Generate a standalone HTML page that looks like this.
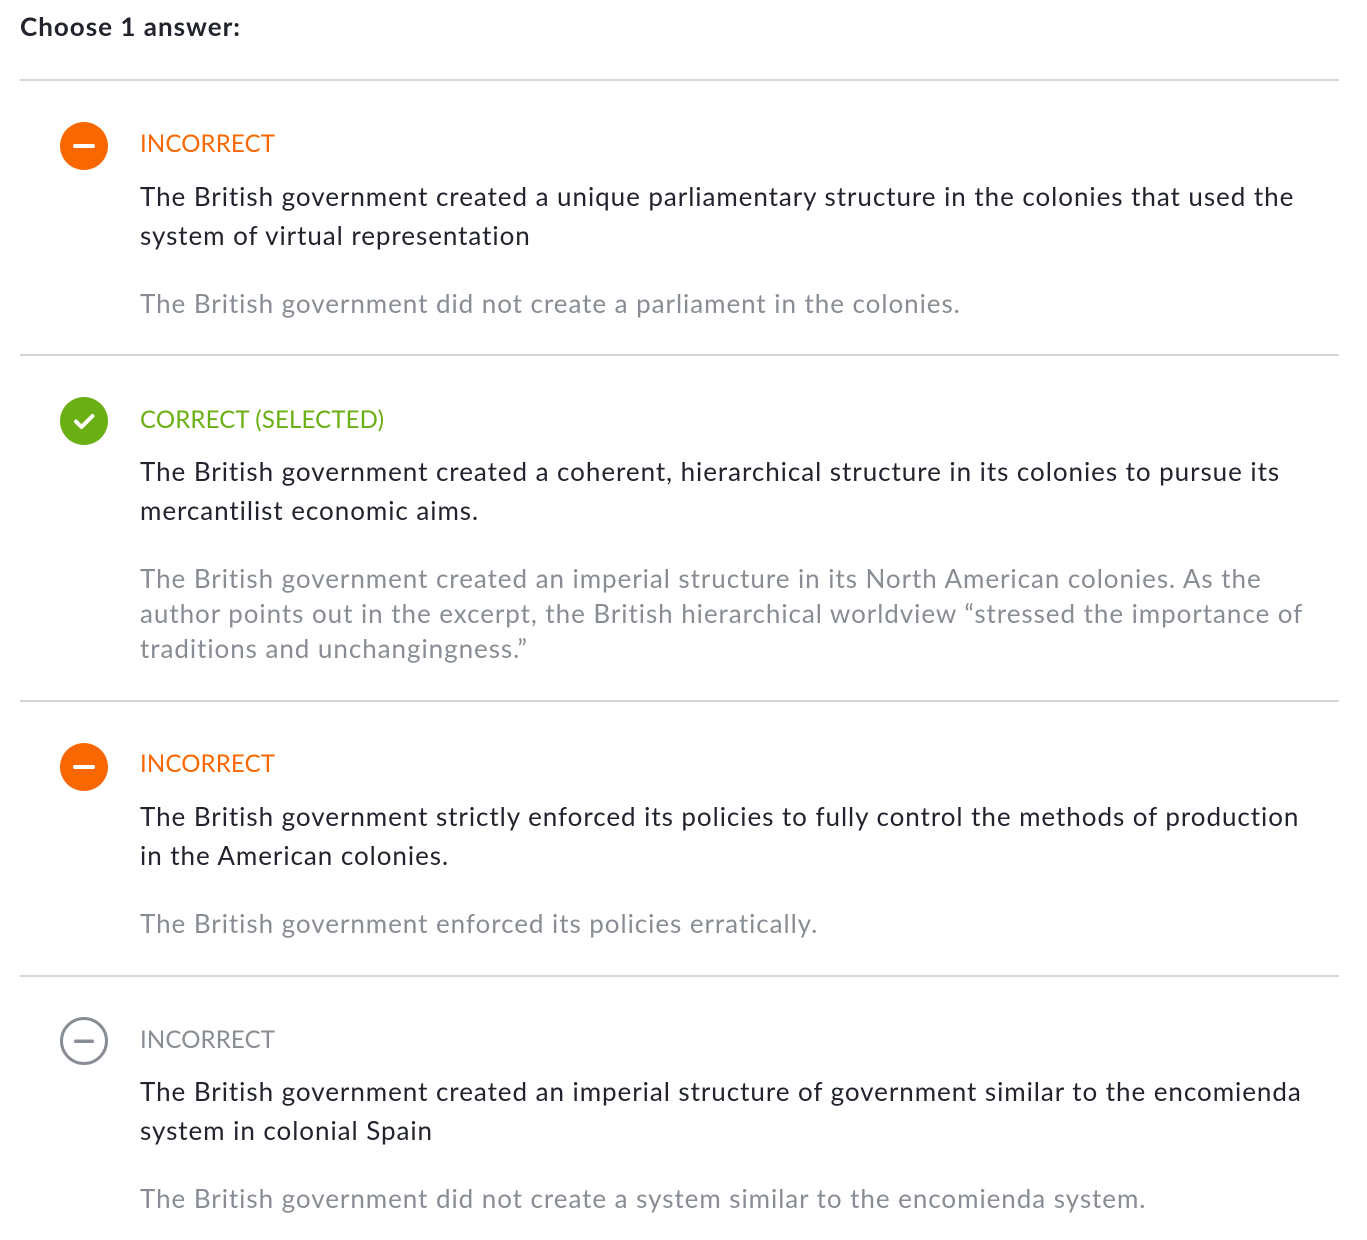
<!DOCTYPE html>
<html><head><meta charset="utf-8"><style>
body{margin:0;width:1367px;height:1240px;background:#fff;font-family:"Lato","Liberation Sans",sans-serif;position:relative;overflow:hidden}
.a{position:absolute;white-space:nowrap}
.h{left:20px;top:10px;font-size:26px;font-weight:bold;color:#21242c;letter-spacing:1px}
.hr{position:absolute;left:20px;width:1319px;height:2px;background:#d6d6d6}
.lab{left:140px;font-size:24px;letter-spacing:0.15px}
.m{left:140px;font-size:26px;line-height:39px;color:#21242c;letter-spacing:0.95px}
.e{left:140px;font-size:26px;line-height:35px;color:#888d93;letter-spacing:0.95px}
.ic{position:absolute;left:60px;width:48px;height:48px}
</style></head><body>
<div class="a h">Choose 1 answer:</div>
<div class="hr" style="top:79px"></div>

<svg class="ic" style="top:122px" viewBox="0 0 48 48"><circle cx="24" cy="24" r="24" fill="#f86700"/><rect x="13" y="22" width="22" height="4" rx="2" fill="#fff"/></svg>
<div class="a lab" style="top:129px;color:#f86700">INCORRECT</div>
<div class="a m" style="top:177px">The British government created a unique parliamentary structure in the colonies that used the<br>system of virtual representation</div>
<div class="a e" style="top:286px">The British government did not create a parliament in the colonies.</div>
<div class="hr" style="top:354px"></div>

<svg class="ic" style="top:397px" viewBox="0 0 48 48"><circle cx="24" cy="24" r="24" fill="#6aaf14"/><path d="M16 24.5l5.5 5.5 11-11" stroke="#fff" stroke-width="4" fill="none" stroke-linecap="round" stroke-linejoin="round"/></svg>
<div class="a lab" style="top:405px;color:#6aaf14">CORRECT (SELECTED)</div>
<div class="a m" style="top:452px">The British government created a coherent, hierarchical structure in its colonies to pursue its<br>mercantilist economic aims.</div>
<div class="a e" style="top:561px">The British government created an imperial structure in its North American colonies. As the<br>author points out in the excerpt, the British hierarchical worldview “stressed the importance of<br>traditions and unchangingness.”</div>
<div class="hr" style="top:700px"></div>

<svg class="ic" style="top:743px" viewBox="0 0 48 48"><circle cx="24" cy="24" r="24" fill="#f86700"/><rect x="13" y="22" width="22" height="4" rx="2" fill="#fff"/></svg>
<div class="a lab" style="top:749px;color:#f86700">INCORRECT</div>
<div class="a m" style="top:797px">The British government strictly enforced its policies to fully control the methods of production<br>in the American colonies.</div>
<div class="a e" style="top:906px">The British government enforced its policies erratically.</div>
<div class="hr" style="top:975px"></div>

<svg class="ic" style="top:1017px" viewBox="0 0 48 48"><circle cx="24" cy="24" r="22.5" fill="none" stroke="#888d93" stroke-width="3"/><rect x="14" y="22.5" width="20" height="3.5" rx="1.75" fill="#888d93"/></svg>
<div class="a lab" style="top:1025px;color:#888d93">INCORRECT</div>
<div class="a m" style="top:1072px">The British government created an imperial structure of government similar to the encomienda<br>system in colonial Spain</div>
<div class="a e" style="top:1181px">The British government did not create a system similar to the encomienda system.</div>
</body></html>
